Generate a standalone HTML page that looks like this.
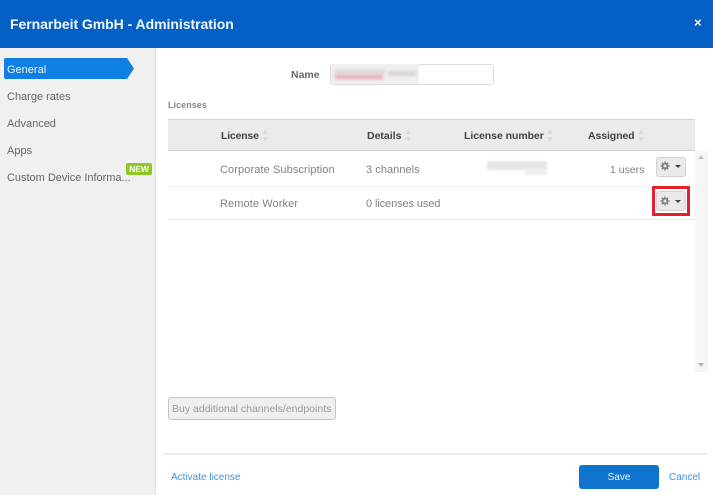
<!DOCTYPE html>
<html><head><meta charset="utf-8">
<style>
html,body{margin:0;padding:0;background:#fff}
#p{position:relative;width:713px;height:495px;overflow:hidden;font-family:"Liberation Sans",sans-serif;font-size:11px;color:#777;background:#fff;filter:blur(.35px)}
#p div{position:absolute;white-space:nowrap}
.t{line-height:14px}
.h{font-weight:bold;color:#444;font-size:10.500px;line-height:14px}
.s{width:6px;height:13px}
.s:before,.s:after{content:"";position:absolute;left:0;border-left:3px solid transparent;border-right:3px solid transparent}
.s:before{top:0;border-bottom:5px solid #dcdcdc}
.s:after{bottom:0;border-top:5px solid #dcdcdc}
.b{background:#eaeaea;border:1px solid #d2d2d2;border-radius:3px;box-sizing:border-box}
.n{color:#666}
.g{position:absolute}
</style></head><body><div id="p">
<div style="left:0;top:0;width:713px;height:48px;background:#0460c4"></div>
<div class="t" style="left:10px;top:16px;color:#f2f7fc;font-size:14px;font-weight:bold;line-height:16px;letter-spacing:-.04px">Fernarbeit GmbH - Administration</div>
<div style="left:694px;top:16px;color:#fff;font-size:13px;font-weight:bold;line-height:14px">×</div>

<div style="left:0;top:48px;width:155px;height:447px;background:#f0f0f0;border-right:1px solid #ddd"></div>
<svg style="position:absolute;left:4px;top:58px" width="131" height="21"><path d="M2 0H123L130 10.500L123 21H2Q0 21 0 19V2Q0 0 2 0Z" fill="#0f7fe3"/></svg>
<div class="t" style="left:7px;top:63px;color:#eef6fd">General</div>
<div class="t n" style="left:7px;top:90px">Charge rates</div>
<div class="t n" style="left:7px;top:117px">Advanced</div>
<div class="t n" style="left:7px;top:144px">Apps</div>
<div class="t n" style="left:7px;top:171px;letter-spacing:-.02px">Custom Device Informa...</div>
<div style="left:126px;top:163px;width:26px;height:12px;background:#8cc820;border-radius:2px;color:#fff;font-size:8.500px;font-weight:bold;line-height:12px;text-align:center">NEW</div>

<div class="t" style="left:291px;top:68px;font-weight:bold;font-size:10.500px;color:#666">Name</div>
<div style="left:330px;top:64px;width:164px;height:21px;box-sizing:border-box;border:1px solid #ddd;border-radius:3px;background:#fff"></div>
<div style="left:331px;top:64px;width:88px;height:20px;background:#f1efef"></div>
<div style="left:335px;top:70px;width:50px;height:4px;background:#d8d4d6;filter:blur(1.500px)"></div>
<div style="left:335px;top:75px;width:48px;height:4px;background:#eba9b3;filter:blur(1.500px)"></div>
<div style="left:388px;top:71px;width:28px;height:5px;background:#d4d4d4;filter:blur(1.500px)"></div>

<div class="t" style="left:168px;top:98px;font-weight:bold;font-size:9px;color:#888;letter-spacing:.05px">Licenses</div>

<div style="left:168px;top:119px;width:527px;height:32px;background:#ebebeb;border-top:1px solid #d2d2d2;border-bottom:1px solid #d2d2d2;box-sizing:border-box"></div>
<div class="h" style="left:221px;top:129px;letter-spacing:-.2px">License</div><div class="s" style="left:262px;top:129px"></div>
<div class="h" style="left:367px;top:129px">Details</div><div class="s" style="left:405px;top:129px"></div>
<div class="h" style="left:464px;top:129px;letter-spacing:-.05px">License number</div><div class="s" style="left:547px;top:129px"></div>
<div class="h" style="left:588px;top:129px;letter-spacing:-.1px">Assigned</div><div class="s" style="left:638px;top:129px"></div>

<div class="t" style="left:220px;top:163px;color:#808080;letter-spacing:.1px">Corporate Subscription</div>
<div class="t" style="left:366px;top:163px;color:#808080;letter-spacing:.05px">3 channels</div>
<div style="left:487px;top:161px;width:60px;height:9px;background:#e6e6e6;filter:blur(1px)"></div>
<div style="left:525px;top:170px;width:22px;height:5px;background:#eeeeee;filter:blur(1px)"></div>
<div class="t" style="left:610px;top:163px;color:#808080;font-size:10.500px">1 users</div>
<div style="left:168px;top:186px;width:527px;height:1px;background:#f2f2f2"></div>

<div class="t" style="left:220px;top:197px;color:#808080;letter-spacing:.1px">Remote Worker</div>
<div class="t" style="left:366px;top:197px;color:#808080;letter-spacing:-.1px">0 licenses used</div>
<div style="left:168px;top:219px;width:527px;height:1px;background:#ebebeb"></div>

<div style="left:695px;top:151px;width:13px;height:221px;background:#f6f6f6"></div>
<div style="left:698px;top:155px;width:0;height:0;border-left:3px solid transparent;border-right:3px solid transparent;border-bottom:4px solid #c4c4c4"></div>
<div style="left:698px;top:363px;width:0;height:0;border-left:3px solid transparent;border-right:3px solid transparent;border-top:4px solid #b4b4b4"></div>

<div class="b" style="left:656px;top:157px;width:30px;height:20px"></div>
<svg class="g" style="left:660px;top:161px" width="10" height="10" viewBox="0 0 10 10"><circle cx="5" cy="5" r="2.400" fill="none" stroke="#808080" stroke-width="1.800"/><path d="M5 .5V2M5 8V9.500M.5 5H2M8 5H9.500M1.800 1.800L2.900 2.900M7.100 7.100L8.200 8.200M1.800 8.200L2.900 7.100M7.100 2.900L8.200 1.800" stroke="#808080" stroke-width="1.400"/></svg>
<div style="left:675px;top:165px;width:0;height:0;border-left:3px solid transparent;border-right:3px solid transparent;border-top:3px solid #444"></div>

<div class="b" style="left:656px;top:191px;width:30px;height:20px"></div>
<svg class="g" style="left:660px;top:196px" width="10" height="10" viewBox="0 0 10 10"><circle cx="5" cy="5" r="2.400" fill="none" stroke="#808080" stroke-width="1.800"/><path d="M5 .5V2M5 8V9.500M.5 5H2M8 5H9.500M1.800 1.800L2.900 2.900M7.100 7.100L8.200 8.200M1.800 8.200L2.900 7.100M7.100 2.900L8.200 1.800" stroke="#808080" stroke-width="1.400"/></svg>
<div style="left:675px;top:200px;width:0;height:0;border-left:3px solid transparent;border-right:3px solid transparent;border-top:3px solid #444"></div>
<div style="left:652px;top:186px;width:38px;height:30px;box-sizing:border-box;border:3px solid #e3202c"></div>

<div class="b" style="left:168px;top:397px;width:168px;height:23px;background:#efefef;border-color:#c4c4c4;color:#999;font-size:10.500px;line-height:23px;padding-left:3px">Buy additional channels/endpoints</div>

<div style="left:164px;top:453px;width:543px;height:2px;background:#ececec"></div>
<div class="t" style="left:171px;top:471px;color:#3f95dc;font-size:10px">Activate license</div>
<div style="left:579px;top:465px;width:80px;height:24px;background:#0f74cc;border-radius:3px;color:#e8f2fb;line-height:25px;text-align:center;font-size:10px">Save</div>
<div class="t" style="left:669px;top:471px;color:#3f95dc;font-size:10px">Cancel</div>
</div></body></html>
